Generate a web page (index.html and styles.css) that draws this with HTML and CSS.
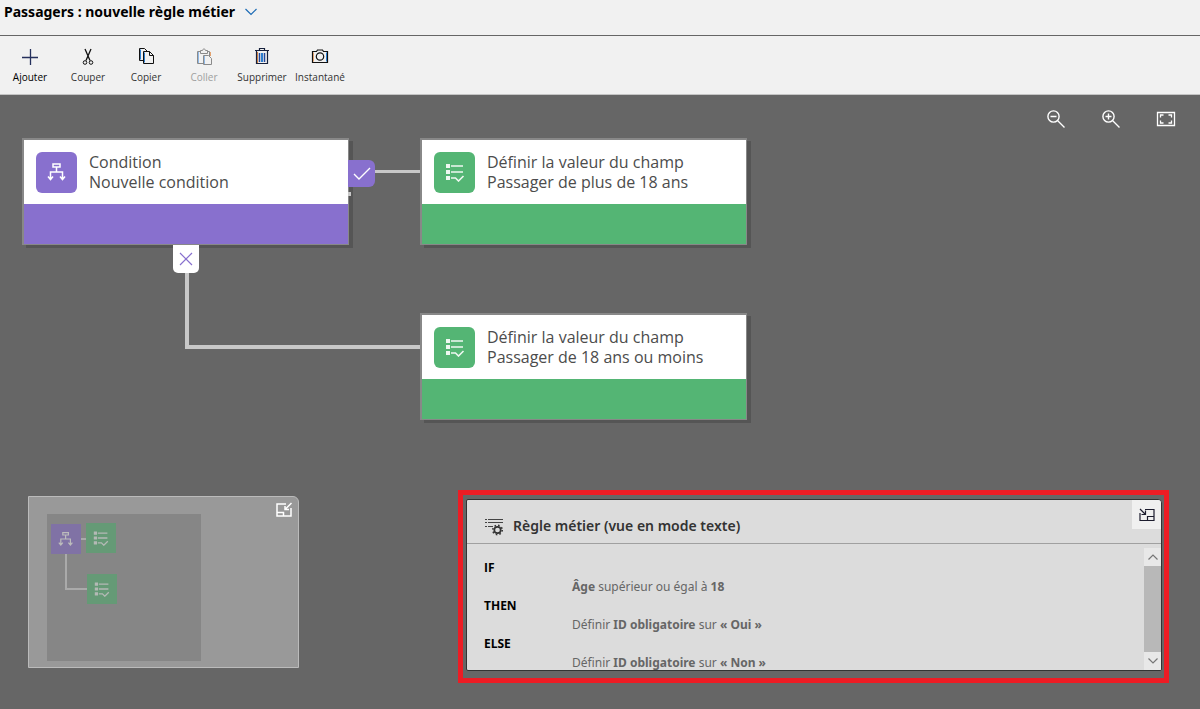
FILE: index.html
```html
<!DOCTYPE html>
<html lang="fr">
<head>
<meta charset="utf-8">
<title>Passagers : nouvelle règle métier</title>
<link rel="stylesheet" href="styles.css">
</head>
<body>
<svg class="defs" aria-hidden="true">
  <symbol id="i-condition" viewBox="0 0 20 20"><path d="M6 2h7v3H6zM9.500 5v5M3.500 16v-6h12v6M1 14.500l2.500 3 2.500-3M13 14.500l2.500 3 2.500-3" fill="none" stroke="currentColor" stroke-width="1.500"/></symbol>
  <symbol id="i-list" viewBox="0 0 20 20"><path d="M1 2h4v4H1zM1 8h4v4H1zM1 14h4v4H1z" fill="currentColor" opacity="0.900"/><path d="M6 4h12M6 10h12M6 16h4.500l3 3 5-5" fill="none" stroke="currentColor" stroke-width="1.600" opacity="0.900"/></symbol>
</svg>

<header class="titlebar">
  <h1 class="title">Passagers : nouvelle règle métier</h1>
  <button class="title-toggle" aria-label="Changer de règle">
    <svg width="12" height="8" viewBox="0 0 12 8"><path d="M0.500 1L6 6.500 11.500 1" fill="none" stroke="#1a6ab5" stroke-width="1.200"/></svg>
  </button>
</header>

<nav class="toolbar" aria-label="Commandes">
  <button class="tool tool-active">
    <svg width="20" height="20" viewBox="0 0 20 20"><path d="M10.500 2v16M2 10.500h16" fill="none" stroke="#25305c" stroke-width="1.300"/></svg>
    <span>Ajouter</span>
  </button>
  <button class="tool">
    <svg width="20" height="20" viewBox="0 0 20 20"><g fill="none" stroke="#111"><path d="M7 2l5 11.500M13 2L8 13.500" stroke-width="1.300"/><circle cx="7" cy="15.500" r="1.800"/><circle cx="13" cy="15.500" r="1.800"/></g></svg>
    <span>Couper</span>
  </button>
  <button class="tool">
    <svg width="20" height="20" viewBox="0 0 20 20"><g fill="#f1f1f1" stroke="#111"><path d="M3.500 1.500h5l3 3v9h-8z"/><path d="M7.500 4.500h6l4 4v8h-10z"/><path d="M13.500 4.500v4h4" fill="none"/></g><path d="M4.500 2.500v10M8.500 5.500v10" stroke="#2d7fd0"/></svg>
    <span>Copier</span>
  </button>
  <button class="tool" disabled>
    <svg width="20" height="20" viewBox="0 0 20 20"><g fill="#f1f1f1" stroke="#8a8a8a"><path d="M3.500 4.500h12v12h-12z"/><path d="M6.500 6.500v-3h2c0-2 3-2 3 0h2v3z"/><path d="M9.500 8.500h5l3 3v6h-8z"/></g><path d="M4.500 5v11M10.500 9v8" stroke="#8fb8e6"/><path d="M16.500 5v4" stroke="#e3a26f"/></svg>
    <span>Coller</span>
  </button>
  <button class="tool">
    <svg width="20" height="20" viewBox="0 0 20 20"><path d="M5.500 5v11" stroke="#d88642"/><path d="M4.500 4v12.500h11V4M3 3.500h14M7.500 3.500v-2h5v2" fill="none" stroke="#16203c" stroke-width="1.200"/><path d="M7.500 6v9M12.500 6v9" stroke="#24479a" stroke-width="1.500"/><path d="M10 6v9" stroke="#2d7fd0" stroke-width="2"/></svg>
    <span>Supprimer</span>
  </button>
  <button class="tool">
    <svg width="20" height="20" viewBox="0 0 20 20"><g fill="none" stroke="#111" stroke-width="1.200"><path d="M2.500 4.500h4l1-1.500h5l1 1.500h4v11h-15z"/><circle cx="10" cy="9.500" r="3.700"/></g><path d="M3.500 5.500v9" stroke="#e3a26f"/><path d="M16.500 5.500v9" stroke="#2d7fd0"/></svg>
    <span>Instantané</span>
  </button>
</nav>

<main class="canvas">
  <div class="diagram">
    <span class="link link-yes"></span>
    <span class="link link-stub"></span>
    <span class="link link-no"></span>

    <article class="node node-condition">
      <div class="node-head">
        <span class="node-icon"><svg width="20" height="20"><use href="#i-condition"/></svg></span>
        <p class="node-text">Condition<br>Nouvelle condition</p>
      </div>
      <div class="node-band"></div>
    </article>
    <span class="port port-yes"><svg width="18" height="16" viewBox="0 0 18 16"><path d="M1 8l5 5L17 2" fill="none" stroke="#fff" stroke-width="1.400"/></svg></span>
    <span class="port port-no"><svg width="14" height="14" viewBox="0 0 14 14"><path d="M1 1l12 12M13 1L1 13" fill="none" stroke="#8870ce" stroke-width="1.200"/></svg></span>

    <article class="node node-action node-over">
      <div class="node-head">
        <span class="node-icon"><svg width="20" height="20"><use href="#i-list"/></svg></span>
        <p class="node-text">Définir la valeur du champ<br>Passager de plus de 18 ans</p>
      </div>
      <div class="node-band"></div>
    </article>
    <article class="node node-action node-under">
      <div class="node-head">
        <span class="node-icon"><svg width="20" height="20"><use href="#i-list"/></svg></span>
        <p class="node-text">Définir la valeur du champ<br>Passager de 18 ans ou moins</p>
      </div>
      <div class="node-band"></div>
    </article>
  </div>

  <div class="zoom-tools">
    <button class="zoom-button" aria-label="Zoom arrière"><svg width="20" height="20" viewBox="0 0 20 20"><g fill="none" stroke="#fff" stroke-width="1.400"><circle cx="7.500" cy="7.500" r="5.600"/><path d="M11.500 11.500l7 7M4.500 7.500h6"/></g></svg></button>
    <button class="zoom-button" aria-label="Zoom avant"><svg width="20" height="20" viewBox="0 0 20 20"><g fill="none" stroke="#fff" stroke-width="1.400"><circle cx="7.500" cy="7.500" r="5.600"/><path d="M11.500 11.500l7 7M4.500 7.500h6M7.500 4.500v6"/></g></svg></button>
    <button class="zoom-button" aria-label="Ajuster à la fenêtre"><svg width="20" height="20" viewBox="0 0 20 20"><g fill="none" stroke="#fff" stroke-width="1.300"><path d="M1.500 3.500h17v13h-17z"/><path d="M4.500 8.500V6h3M12.500 6h3v2.500M15.500 11.500V14h-3M7.500 14h-3v-2.500"/></g></svg></button>
  </div>

  <div class="dock">
    <section class="minimap" aria-label="Mini-carte">
      <div class="minimap-view">
        <span class="mini-link mini-link-yes"></span>
        <span class="mini-link mini-link-no"></span>
        <span class="mini mini-condition"><svg width="16" height="16"><use href="#i-condition"/></svg></span>
        <span class="mini mini-over"><svg width="16" height="16"><use href="#i-list"/></svg></span>
        <span class="mini mini-under"><svg width="16" height="16"><use href="#i-list"/></svg></span>
      </div>
      <button class="minimap-button" aria-label="Réduire la mini-carte"><svg width="18" height="16" viewBox="0 0 18 16"><g fill="none" stroke="#fff" stroke-width="1.500"><path d="M11 2H2v12h14V6M2 10.500h6.500V14M16.500 1L10 7.500M10 4v3.500h4"/></g></svg></button>
    </section>

    <div class="highlight">
      <section class="rule">
        <div class="rule-head">
          <svg width="20" height="18" viewBox="0 0 20 18"><path d="M1 1.500h2M4 1.500h15M1 4.500h2M4 4.500h15M1 8.500h2M4 8.500h5" stroke="#444" stroke-width="1.200"/><circle cx="13.500" cy="12" r="3.200" fill="none" stroke="#333" stroke-width="1.700"/><circle cx="13.500" cy="12" r="4.700" fill="none" stroke="#333" stroke-width="1.600" stroke-dasharray="1.600 2.090"/></svg>
          <h2 class="rule-title">Règle métier (vue en mode texte)</h2>
          <button class="rule-button" aria-label="Réduire la vue texte"><svg width="16" height="14" viewBox="0 0 16 14"><path d="M6 1.500h9v11H1V5M8.500 12.500V8.500H15M1 1l5 5M6.500 2.500V6.500H2.500" fill="none" stroke="#1c1c2e" stroke-width="1.200"/></svg></button>
        </div>
        <div class="rule-body">
          <dl class="clauses">
            <dt>IF</dt><dd><b>Âge</b> supérieur ou égal à <b>18</b></dd>
            <dt>THEN</dt><dd>Définir <b>ID obligatoire</b> sur <b>« Oui »</b></dd>
            <dt>ELSE</dt><dd>Définir <b>ID obligatoire</b> sur <b>« Non »</b></dd>
          </dl>
          <div class="scroll">
            <button class="scroll-arrow" aria-label="Défiler vers le haut"><svg width="10" height="6" viewBox="0 0 10 6"><path d="M0.500 5.500L5 1l4.500 4.500" fill="none" stroke="#777" stroke-width="1.200"/></svg></button>
            <span class="scroll-thumb"></span>
            <button class="scroll-arrow" aria-label="Défiler vers le bas"><svg width="10" height="6" viewBox="0 0 10 6"><path d="M0.500 0.500L5 5l4.500-4.500" fill="none" stroke="#777" stroke-width="1.200"/></svg></button>
          </div>
        </div>
      </section>
    </div>
  </div>
</main>
</body>
</html>
```
FILE: styles.css
```css
* { box-sizing: border-box; }

body {
  margin: 0;
  min-height: 100vh;
  display: flex;
  flex-direction: column;
  background: #f1f1f1;
  color: #000;
  font-family: "Open Sans", "Noto Sans", sans-serif;
}

h1, h2, p, dl, dd { margin: 0; }

button {
  border: 0;
  padding: 0;
  background: none;
  color: inherit;
  font: inherit;
}

svg { display: block; flex: none; }

.defs { position: absolute; width: 0; height: 0; }

/* Title and toolbar */
.titlebar {
  display: flex;
  align-items: center;
  gap: 10px;
  padding: 0 4px 12px;
  border-bottom: 1px solid #666;
}

.title {
  font-family: "Noto Sans", "Open Sans", sans-serif;
  font-size: 14px;
  line-height: 23px;
  font-weight: 700;
}

.toolbar {
  display: flex;
  padding: 11px 1px 9px;
  border-bottom: 1px solid #c4c4c4;
}

.tool {
  width: 58px;
  display: flex;
  flex-direction: column;
  align-items: center;
  gap: 2px;
  color: #333;
  font-size: 10px;
  line-height: 16px;
}

.tool-active { color: #000; }
.tool:disabled { color: #a0a0a0; }

/* Canvas */
.canvas {
  position: relative;
  flex: 1;
  min-height: 614px;
  display: flex;
  flex-direction: column;
  justify-content: space-between;
  background: #666;
}

.diagram { position: absolute; inset: 0; }

.node {
  position: absolute;
  width: 327px;
  border: solid #888;
  border-width: 2px 1px 1px 2px;
  box-shadow: 4px 3px 0 #555;
}

.node-condition { left: 22px; top: 43px; }
.node-over { left: 420px; top: 43px; }
.node-under { left: 420px; top: 218px; }

.node-head {
  display: flex;
  align-items: center;
  gap: 12px;
  height: 64px;
  padding: 0 12px;
  background: #fff;
}

.node-icon {
  display: grid;
  place-items: center;
  width: 41px;
  height: 41px;
  border-radius: 6px;
  color: #fff;
}

.node-text {
  color: #4c4c4c;
  font-size: 16px;
  line-height: 20px;
}

.node-band { height: 40px; }

.node-condition .node-icon,
.node-condition .node-band { background: #8870ce; }
.node-action .node-icon,
.node-action .node-band { background: #54b574; }

.port {
  position: absolute;
  display: grid;
  place-items: center;
}

.port-yes {
  left: 348px;
  top: 65px;
  width: 27px;
  height: 27px;
  border-radius: 0 6px 6px 0;
  background: #8870ce;
}

.port-no {
  left: 173px;
  top: 150px;
  width: 26px;
  height: 28px;
  border-radius: 0 0 5px 5px;
  background: #fff;
}

.link { position: absolute; }
.link-yes { left: 375px; top: 75px; width: 45px; height: 3px; background: #c8c8c8; }
.link-stub { left: 348px; top: 97px; width: 3px; height: 4px; background: #c8c8c8; z-index: 1; }
.link-no {
  left: 185px;
  top: 170px;
  width: 235px;
  height: 84px;
  border: solid #c8c8c8;
  border-width: 0 0 4px 4px;
}

.zoom-tools {
  position: relative;
  display: flex;
  justify-content: flex-end;
  gap: 35px;
  padding: 14px 24px;
}

/* Panels docked at the bottom of the canvas */
.dock {
  position: relative;
  display: flex;
  justify-content: space-between;
  align-items: flex-start;
  gap: 24px;
  padding: 0 31px 26px 28px;
}

.minimap {
  flex: none;
  display: flex;
  justify-content: space-between;
  align-items: flex-start;
  width: 271px;
  margin-top: 6px;
  padding: 17px 5px 6px 18px;
  border: 1px solid #bbb;
  border-radius: 0 6px 0 0;
  background: #999;
}

.minimap-view {
  position: relative;
  width: 154px;
  height: 147px;
  background: #868686;
}

.minimap-button { margin-top: -12px; }

.mini {
  position: absolute;
  display: grid;
  place-items: center;
  width: 30px;
  height: 30px;
  color: #bcbcbc;
}

.mini-condition { left: 4px; top: 10px; background: #8072a5; }
.mini-over { left: 39px; top: 9px; background: #659a76; }
.mini-under { left: 40px; top: 60px; background: #659a76; }

.mini-link { position: absolute; }
.mini-link-yes { left: 33px; top: 24px; width: 7px; height: 2px; background: #aaa; }
.mini-link-no {
  left: 18px;
  top: 40px;
  width: 23px;
  height: 36px;
  border: solid #aaa;
  border-width: 0 0 2px 2px;
}

.highlight {
  flex: 0 1 711px;
  min-width: 0;
  padding: 4px 2px 7px 3px;
  border: 5px solid #ed1c24;
}

.rule {
  overflow: hidden;
  border: 1px solid #333;
  border-radius: 2px 4px 2px 2px;
  background: #dcdcdc;
}

.rule-head {
  display: flex;
  align-items: center;
  gap: 9px;
  height: 44px;
  padding-left: 17px;
  border-bottom: 1px solid #a0a0a0;
}

.rule-title {
  flex: 1;
  padding-top: 8px;
  color: #333;
  font-family: "Noto Sans", "Open Sans", sans-serif;
  font-size: 14px;
  line-height: 20px;
  font-weight: 600;
}

.rule-head > svg { margin-top: 10px; }

.rule-button {
  display: grid;
  place-items: center;
  align-self: flex-start;
  width: 29px;
  height: 29px;
  background: #f0f0f0;
}

.rule-body {
  display: flex;
  height: 126px;
  padding-top: 4px;
}

.clauses {
  flex: 1;
  padding: 10px 17px 0;
  font-size: 12px;
  line-height: 19px;
}

.clauses dt { font-weight: 700; }
.clauses dd {
  padding-left: 88px;
  color: #666;
  font-family: "Noto Sans", "Open Sans", sans-serif;
}
.clauses b { font-weight: 700; }

.scroll {
  display: flex;
  flex-direction: column;
  width: 17px;
}

.scroll-arrow {
  display: grid;
  place-items: center;
  height: 18px;
  background: #e8e8e8;
}

.scroll-thumb { flex: 1; background: #b8b8b8; }
```
